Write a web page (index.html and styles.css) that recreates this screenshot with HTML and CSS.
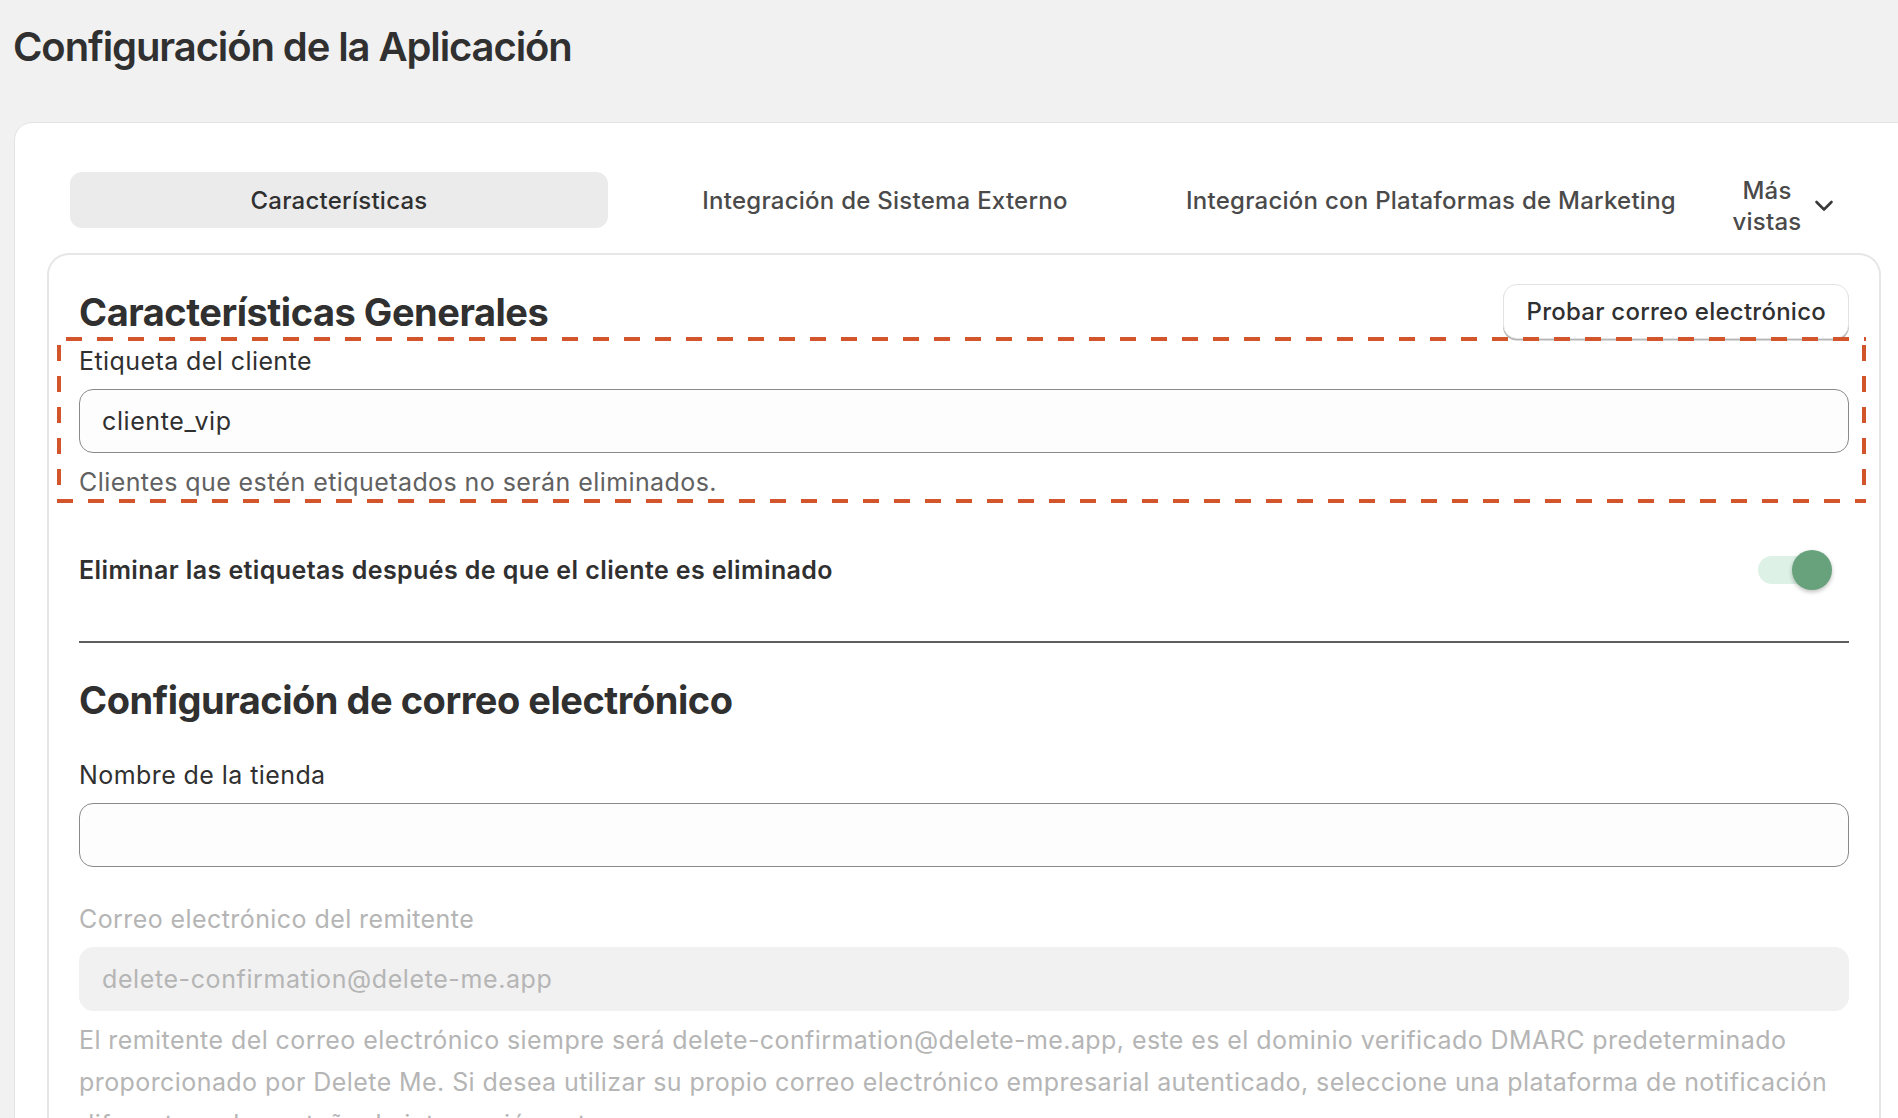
FILE: index.html
```html
<!DOCTYPE html>
<html lang="es">
<head>
<meta charset="utf-8">
<title>Configuración de la Aplicación</title>
<link rel="stylesheet" href="styles.css">
</head>
<body>
  <h1 class="page-title">Configuración de la Aplicación</h1>
  <div class="card">
    <nav class="tabs">
      <div class="tab tab-active">Características</div>
      <div class="tab">Integración de Sistema Externo</div>
      <div class="tab">Integración con Plataformas de Marketing</div>
      <div class="tab tab-more">
        <span class="tab-more-label">Más<br>vistas</span>
        <svg class="chevron" width="20" height="12" viewBox="0 0 20 12"><polyline points="2.5,2 10,9.5 17.5,2" fill="none" stroke="#3a3a3a" stroke-width="2.6" stroke-linecap="round" stroke-linejoin="round"/></svg>
      </div>
    </nav>
    <section class="panel">
      <div class="section-header">
        <h2 class="section-title">Características Generales</h2>
        <button class="btn" type="button">Probar correo electrónico</button>
      </div>
      <div class="field field-highlight">
        <label class="label" for="tag">Etiqueta del cliente</label>
        <input class="text-input" id="tag" type="text" value="cliente_vip">
        <p class="help">Clientes que estén etiquetados no serán eliminados.</p>
      </div>
      <div class="toggle-row">
        <span class="toggle-label">Eliminar las etiquetas después de que el cliente es eliminado</span>
        <span class="toggle"><span class="toggle-track"></span><span class="toggle-knob"></span></span>
      </div>
      <hr class="divider">
      <h2 class="section-title section-title-2">Configuración de correo electrónico</h2>
      <div class="field field-store">
        <label class="label" for="store">Nombre de la tienda</label>
        <input class="text-input" id="store" type="text" value="">
      </div>
      <div class="field field-disabled">
        <label class="label" for="sender">Correo electrónico del remitente</label>
        <input class="text-input" id="sender" type="text" value="delete-confirmation@delete-me.app" disabled>
        <p class="help">El remitente del correo electrónico siempre será delete-confirmation@delete-me.app, este es el dominio verificado DMARC predeterminado proporcionado por Delete Me. Si desea utilizar su propio correo electrónico empresarial autenticado, seleccione una plataforma de notificación diferente en la pestaña de integración externa.</p>
      </div>
    </section>
  </div>
</body>
</html>
```

FILE: styles.css
```css
html, body {
  margin: 0;
  padding: 0;
  background: #f1f1f1;
  overflow: hidden;
  font-family: Inter, "Noto Sans", sans-serif;
  color: #303030;
}

.page-title {
  margin: 0;
  padding: 23px 0 0 13px;
  font-size: 40px;
  line-height: 48px;
  font-weight: 600;
  letter-spacing: -1.1px;
  color: #303030;
}

.card {
  box-sizing: border-box;
  width: 1900px;
  min-height: 1100px;
  margin: 51px 0 0 14px;
  padding: 49px 32px 0;
  background: #fff;
  border: 1px solid #e3e3e3;
  border-radius: 18px;
}

.tabs {
  display: flex;
  align-items: center;
  gap: 8px;
  padding: 0 23px;
}

.tab {
  box-sizing: border-box;
  flex: 1 1 0;
  height: 56px;
  display: flex;
  align-items: center;
  justify-content: center;
  border-radius: 12px;
  font-size: 24px;
  font-weight: 500;
  letter-spacing: 0.25px;
  color: #4a4a4a;
  white-space: nowrap;
}

.tab-active {
  background: #ebebeb;
  color: #303030;
}

.tab-more {
  flex: 0 0 150px;
  padding-top: 12px;
  gap: 12px;
}

.tab-more-label {
  line-height: 31px;
  text-align: center;
}

.chevron {
  display: block;
}

.panel {
  margin-top: 25px;
  min-height: 900px;
  padding: 29px 30px 0;
  border: 2px solid #e6e6e6;
  border-bottom: 0;
  border-radius: 22px 22px 0 0;
}

.section-header {
  display: flex;
  align-items: center;
  justify-content: space-between;
}

.section-title {
  margin: 0;
  font-size: 38px;
  line-height: 44px;
  font-weight: 700;
  letter-spacing: -0.47px;
  color: #303030;
}

.btn {
  box-sizing: border-box;
  height: 55px;
  padding: 0 22px;
  background: #fff;
  border: 1px solid #e3e3e3;
  border-radius: 14px;
  box-shadow: 0 1.5px 0 #b5b5b5;
  font-family: Inter, "Noto Sans", sans-serif;
  font-size: 24px;
  font-weight: 500;
  letter-spacing: 0.25px;
  color: #303030;
}

.field {
  display: flex;
  flex-direction: column;
}

.field-highlight {
  position: relative;
  margin-top: 6px;
}

.field-highlight::after {
  content: "";
  position: absolute;
  top: -8px;
  left: -22px;
  right: -17px;
  bottom: 0;
  pointer-events: none;
  background:
    repeating-linear-gradient(90deg, #d3552b 0 16px, transparent 16px 31px) left 9px top / 100% 4px no-repeat,
    repeating-linear-gradient(90deg, #d3552b 0 16px, transparent 16px 31px) left bottom / 100% 4px no-repeat,
    repeating-linear-gradient(180deg, #d3552b 0 16px, transparent 16px 31px) left top 8px / 4px 100% no-repeat,
    repeating-linear-gradient(180deg, #d3552b 0 16px, transparent 16px 31px) right top 8px / 4px 100% no-repeat;
}

.label {
  font-size: 25px;
  line-height: 32px;
  font-weight: 400;
  letter-spacing: 0.42px;
  color: #303030;
  margin-bottom: 12px;
}

.text-input {
  box-sizing: border-box;
  width: 100%;
  height: 64px;
  margin: 0;
  padding: 0 22px;
  background: #fdfdfd;
  border: 1px solid #8a8a8a;
  border-radius: 14px;
  font-family: Inter, "Noto Sans", sans-serif;
  font-size: 25px;
  letter-spacing: 0.6px;
  color: #303030;
  outline: none;
}

.help {
  margin: 8px 0 0;
  font-size: 25px;
  line-height: 42px;
  letter-spacing: 0.42px;
  color: #616161;
}

.toggle-row {
  margin-top: 47px;
  height: 40px;
  display: flex;
  align-items: center;
  justify-content: space-between;
  padding-right: 17px;
}

.toggle-label {
  font-size: 25px;
  font-weight: 600;
  letter-spacing: 0.41px;
  color: #303030;
}

.toggle {
  position: relative;
  width: 74px;
  height: 40px;
}

.toggle-track {
  position: absolute;
  left: 0;
  top: 6px;
  width: 68px;
  height: 28px;
  border-radius: 14px;
  background: #ddf1e6;
}

.toggle-knob {
  position: absolute;
  right: 0;
  top: 0;
  width: 40px;
  height: 40px;
  border-radius: 50%;
  background: #68a27c;
  box-shadow: 0 2px 4px rgba(0, 0, 0, 0.25);
}

.divider {
  margin: 51px 0 0;
  height: 2px;
  border: 0;
  background: #5e5e5e;
}

.section-title-2 {
  margin-top: 35px;
}

.field-store {
  margin-top: 37px;
}

.field-disabled {
  margin-top: 36px;
}

.field-disabled .label {
  color: #b5b5b5;
}

.field-disabled .text-input {
  background: #f1f1f1;
  border-color: #f1f1f1;
  color: #b5b5b5;
  -webkit-text-fill-color: #b5b5b5;
}

.field-disabled .help {
  color: #b5b5b5;
}
```
